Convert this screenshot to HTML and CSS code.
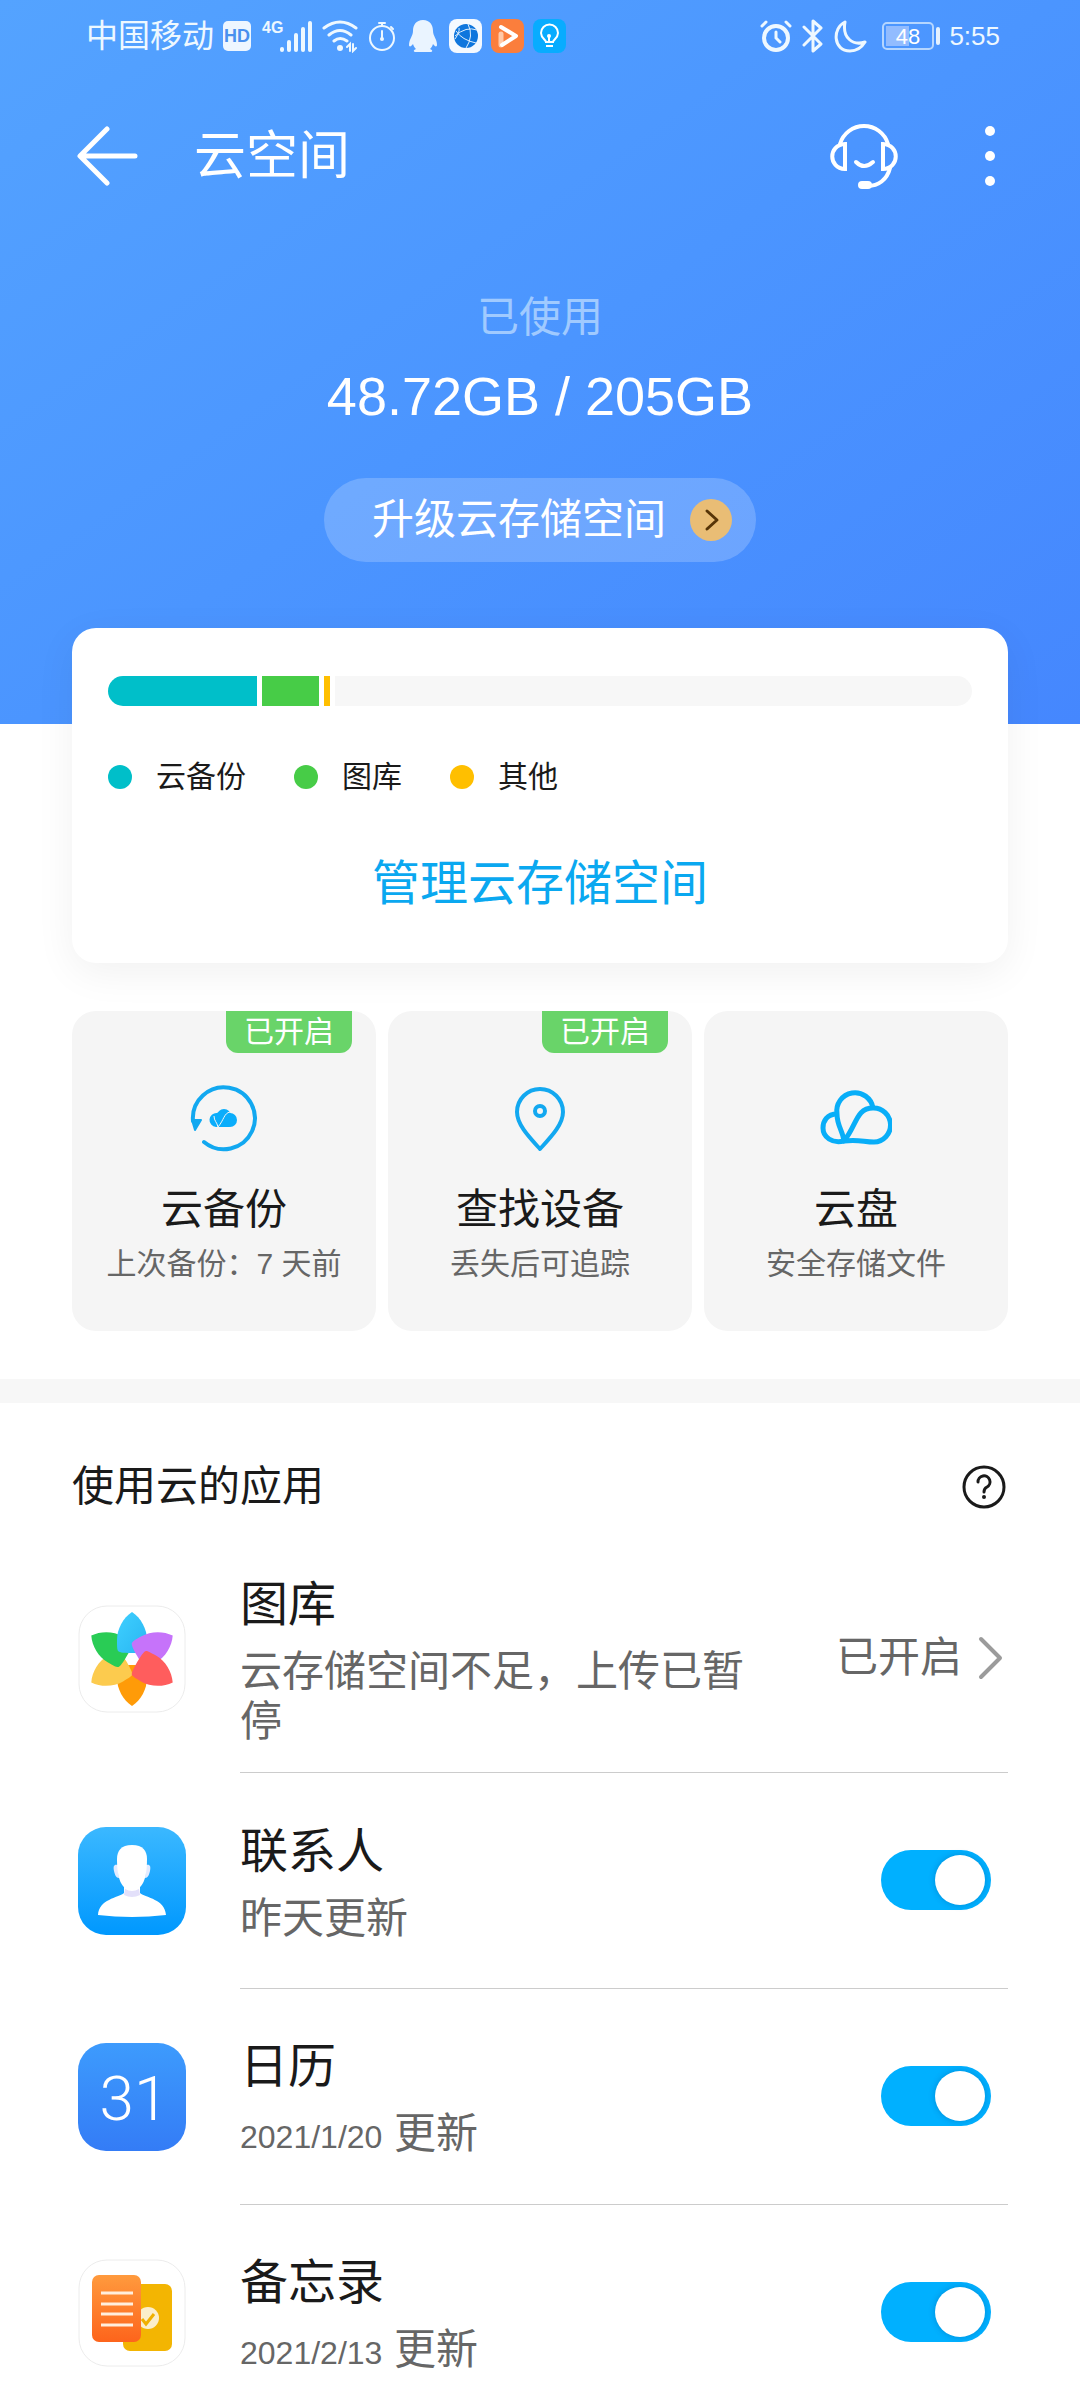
FILE: index.html
```html
<!DOCTYPE html>
<html lang="zh-CN">
<head>
<meta charset="utf-8">
<meta name="viewport" content="width=device-width, initial-scale=1">
<title>云空间</title>
<link rel="stylesheet" href="styles.css">
</head>
<body>
<header class="hero">
  <div class="status">
    <div class="status-group">
      <span class="carrier">中国移动<svg width="30" height="32" viewBox="0 0 30 32"><rect x="1" y="1" width="28" height="30" rx="5" fill="#eef6ff"/><text x="15" y="22" text-anchor="middle" class="hd">HD</text></svg></span>
      <svg width="52" height="34" viewBox="0 0 52 34" fill="#eef8ff"><text x="1" y="14" class="net">4G</text><rect x="19" y="28" width="4" height="5" rx="2"/><rect x="26" y="21" width="4" height="12" rx="2"/><rect x="33" y="14" width="4" height="19" rx="2"/><rect x="40" y="8" width="4" height="25" rx="2"/><rect x="47" y="2" width="4" height="31" rx="2"/></svg>
      <svg width="36" height="34" viewBox="0 0 36 34" fill="none" stroke="#eef8ff" stroke-width="3" stroke-linecap="round"><path d="M2 9Q18-3 34 9M7 16Q18 7 29 16M12 22Q18 17 25 22"/><circle cx="18" cy="29" r="3" fill="#eef8ff" stroke="none"/><path d="M25 28l3-3v7M31 25v7l3-3" stroke-width="2"/></svg>
      <svg width="30" height="34" viewBox="0 0 30 34" fill="none" stroke="#eef8ff" stroke-width="2"><circle cx="15" cy="19" r="12"/><path d="M12 4h6M15 4v3M24 8l2 2M15 12v7" stroke-linecap="round"/><circle cx="15" cy="20" r="2" fill="#eef8ff" stroke="none"/></svg>
      <svg width="34" height="34" viewBox="0 0 34 34" fill="#eaf4ff"><path d="M17 1c-7 0-10 5-10 11 0 5-4 8-4 14 0 2 2 2 4-1 1 3 2 4 3 5-3 1-3 3 0 3h14c3 0 3-2 0-3 1-1 2-2 3-5 2 3 4 3 4 1 0-6-4-9-4-14 0-6-3-11-10-11z"/></svg>
      <svg width="33" height="34" viewBox="0 0 33 34"><rect width="33" height="34" rx="8" fill="#f4f9ff"/><circle cx="17" cy="17" r="12" fill="#0f76dd"/><path d="M6 17Q17 7 28 11M19 5q6 12-2 24M7 12q6 9 20 12M6 20q5-7 4-11" fill="none" stroke="#dff0ff" stroke-width="1"/></svg>
      <svg width="33" height="34" viewBox="0 0 33 34"><rect width="33" height="34" rx="8" fill="#fb7e3c"/><path d="M10 15v11" fill="none" stroke="#ffc9a8" stroke-width="5" stroke-linecap="round"/><path d="M10 8l15 9-14 9" fill="none" stroke="#fff" stroke-width="4" stroke-linecap="round" stroke-linejoin="round"/></svg>
      <svg width="33" height="34" viewBox="0 0 33 34"><rect width="33" height="34" rx="8" fill="#08acff"/><path d="M13 23c0-2-5-4-5-9a8 8 0 0 1 17 0c0 5-5 7-5 9zM13 27h7M16 23v-6" fill="none" stroke="#fff" stroke-width="2"/><circle cx="16" cy="17" r="2" fill="#fff"/></svg>
    </div>
    <div class="status-group">
      <svg width="34" height="34" viewBox="0 0 34 34" fill="none" stroke="#eef8ff" stroke-width="4" stroke-linecap="round"><circle cx="17" cy="19" r="12"/><path d="M17 13v6l4 4M3 7l4-4M31 7l-4-4" stroke-width="3"/></svg>
      <svg width="24" height="34" viewBox="0 0 24 34" fill="none" stroke="#eef8ff" stroke-width="3" stroke-linejoin="round" stroke-linecap="round"><path d="M3 8l17 17-8 7V2l8 7L3 26"/></svg>
      <svg width="34" height="34" viewBox="0 0 34 34" fill="none" stroke="#eef8ff" stroke-width="3" stroke-linejoin="round"><path d="M12 3C-1 9 0 32 17 32c8 0 12-4 15-9-12 4-23-4-20-20z"/></svg>
      <svg width="66" height="34" viewBox="0 0 66 34"><rect x="8" y="4" width="50" height="26" rx="4" fill="none" stroke="#b5d6ff" stroke-width="2"/><rect x="11" y="7" width="23" height="20" fill="#92bcff"/><rect x="61" y="8" width="4" height="18" rx="2" fill="#e4f1ff"/><text x="33" y="25" text-anchor="middle" class="level">48</text></svg>
      <time class="clock">5:55</time>
    </div>
  </div>

  <nav class="appbar">
    <button class="icon-btn" aria-label="返回"><svg width="62" height="60" viewBox="0 0 62 60" fill="none" stroke="#fff" stroke-width="5" stroke-linecap="round" stroke-linejoin="round"><path d="M31 3L4 30l27 27M5 30h54"/></svg></button>
    <h1 class="appbar-title">云空间</h1>
    <button class="icon-btn" aria-label="客服"><svg width="68" height="68" viewBox="0 0 68 68" fill="none" stroke="#fff" stroke-width="4" stroke-linecap="round"><path d="M10 22a25 25 0 0 1 48 0M60 46c-3 12-12 18-22 18"/><path d="M15 22v25C-2 46-2 23 15 22zM53 22v25c17-1 17-24 0-25z"/><path d="M26 40q8 8 17 0"/><path d="M32 63h6" stroke-width="8"/></svg></button>
    <button class="icon-btn" aria-label="更多"><svg width="12" height="60" viewBox="0 0 12 60" fill="#fff"><circle cx="6" cy="5" r="5"/><circle cx="6" cy="30" r="5"/><circle cx="6" cy="55" r="5"/></svg></button>
  </nav>

  <section class="usage">
    <p class="usage-label">已使用</p>
    <p class="usage-value">48.72GB / 205GB</p>
    <button class="upgrade">升级云存储空间<svg width="42" height="42" viewBox="0 0 42 42"><circle cx="21" cy="21" r="21" fill="#e9bd75"/><path d="M17 12l10 9-10 9" fill="none" stroke="#573508" stroke-width="3" stroke-linecap="round" stroke-linejoin="round"/></svg></button>
  </section>
</header>

<main>
  <section class="storage">
    <div class="meter">
      <span class="backup" style="flex-grow:149"></span>
      <span class="gallery" style="flex-grow:57"></span>
      <span class="other" style="flex-grow:6"></span>
      <span class="free" style="flex-grow:637"></span>
    </div>
    <ul class="legend">
      <li><i class="dot backup"></i>云备份</li>
      <li><i class="dot gallery"></i>图库</li>
      <li><i class="dot other"></i>其他</li>
    </ul>
    <a class="manage" href="#manage">管理云存储空间</a>
  </section>

  <section class="tiles">
    <a class="tile" href="#backup">
      <span class="badge">已开启</span>
      <svg width="72" height="72" viewBox="0 0 72 72"><path d="M5 38a31 31 0 1 1 11 21" fill="none" stroke="#12a8f0" stroke-width="4" stroke-linecap="round"/><path d="M4 37h9l-6 10z" fill="#12a8f0" stroke="#12a8f0" stroke-width="2" stroke-linejoin="round"/><path d="M28 44h13a8 8 0 0 0 0-14 9 9 0 0 0-12 0 7 7 0 0 0-1 14z" fill="#0aadfb"/><circle cx="42" cy="37" r="7" fill="#0aadfb"/><circle cx="36" cy="33" r="7" fill="#0aadfb"/><path d="M42 29c-6 1-6 8-12 15-1-5-4-6-4-11" fill="none" stroke="#f5f5f5" stroke-width="1"/></svg>
      <b>云备份</b><small>上次备份：7 天前</small>
    </a>
    <a class="tile" href="#find">
      <span class="badge">已开启</span>
      <svg width="72" height="72" viewBox="0 0 72 72" fill="none" stroke="#12a8f0" stroke-width="4" stroke-linejoin="round"><path d="M36 66C26 55 13 42 13 29a23 23 0 0 1 46 0c0 13-13 26-23 37z"/><circle cx="36" cy="28" r="5"/></svg>
      <b>查找设备</b><small>丢失后可追踪</small>
    </a>
    <a class="tile" href="#drive">
      <svg width="72" height="72" viewBox="0 0 72 72" fill="none" stroke="#08aef8" stroke-width="5" stroke-linejoin="round"><path d="M24 58c14-2 20 1 30 1a17 17 0 1 0-1-34c-17 0-16 17-29 33z"/><path d="M53 25A18 18 0 0 0 17 31c0 12 6 17 7 27"/><path d="M17 31C7 31 3 38 3 45c0 9 9 16 21 13"/></svg>
      <b>云盘</b><small>安全存储文件</small>
    </a>
  </section>

  <section class="apps">
    <div class="apps-head">
      <h2>使用云的应用</h2>
      <button class="icon-btn" aria-label="帮助"><svg width="44" height="44" viewBox="0 0 44 44" fill="none" stroke="#1a1a1a" stroke-width="3" stroke-linecap="round"><circle cx="22" cy="22" r="20"/><path d="M16 17a6 6 0 1 1 9 5c-2 1-3 2-3 5"/><circle cx="22" cy="32" r="2" fill="#1a1a1a" stroke="none"/></svg></button>
    </div>
    <ul class="app-list">
      <li class="app">
        <svg class="app-icon" viewBox="0 0 108 108"><defs>
          <linearGradient id="g-blue" x1="0" y1="0" x2="1" y2="1"><stop offset="0" stop-color="#3fd0ff"/><stop offset="1" stop-color="#29b6f2"/></linearGradient>
          <path id="petal" d="M54 7C45 13 39 24 39 35c0 6 0 9 1 11 1 1 3 2 14 2s13-1 14-2c1-2 1-5 1-11 0-11-6-22-15-28z"/></defs>
          <rect x="1" y="1" width="106" height="106" rx="28" fill="#fff" stroke="#ececec"/>
          <use href="#petal" fill="#ff9b08" transform="rotate(180 54 54)"/>
          <use href="#petal" fill="#fccb4e" transform="rotate(240 54 54)"/>
          <use href="#petal" fill="#29cc55" transform="rotate(300 54 54)"/>
          <use href="#petal" fill="url(#g-blue)"/>
          <use href="#petal" fill="#c673fa" transform="rotate(60 54 54)"/>
          <use href="#petal" fill="#ff5d5d" transform="rotate(120 54 54)"/>
          <circle cx="54" cy="54" r="5" fill="#fff"/></svg>
        <a class="app-body app-link" href="#gallery">
          <span class="app-text"><b>图库</b><small>云存储空间不足，上传已暂停</small></span>
          <span class="app-state">已开启<svg width="26" height="44" viewBox="0 0 26 44" fill="none" stroke="#9b9b9b" stroke-width="4" stroke-linecap="round" stroke-linejoin="round"><path d="M3 3l19 19L3 41"/></svg></span>
        </a>
      </li>
      <li class="app">
        <svg class="app-icon" viewBox="0 0 108 108"><defs><linearGradient id="g-contact" x1="0" y1="0" x2="0" y2="1"><stop offset="0" stop-color="#3bb8ff"/><stop offset="1" stop-color="#0098fe"/></linearGradient></defs><rect width="108" height="108" rx="28" fill="url(#g-contact)"/><path d="M46 58v8c-6 5-25 6-26 22q34 4 68 0c-1-16-20-17-26-22v-8z" fill="#fff"/><path d="M47 62q7 4 14 0l1 6q-8 4-16 0z" fill="#e3e0fa"/><path d="M40 38c-4-1-5 1-4 6 1 4 2 7 5 7M68 38c4-1 5 1 4 6-1 4-2 7-5 7" fill="#e4ebff"/><path d="M54 18c-11 0-15 6-15 14 0 19 4 31 15 31s15-12 15-31c0-8-4-14-15-14z" fill="#fff"/></svg>
        <label class="app-body">
          <span class="app-text"><b>联系人</b><small>昨天更新</small></span>
          <input class="switch" type="checkbox" role="switch" checked>
        </label>
      </li>
      <li class="app">
        <svg class="app-icon" viewBox="0 0 108 108"><defs><linearGradient id="g-cal" x1="0" y1="0" x2="0" y2="1"><stop offset="0" stop-color="#3d9bfd"/><stop offset="1" stop-color="#347cf6"/></linearGradient></defs><rect width="108" height="108" rx="28" fill="url(#g-cal)"/><text x="56" y="77" text-anchor="middle" class="day">31</text></svg>
        <label class="app-body">
          <span class="app-text"><b>日历</b><small><time>2021/1/20</time> 更新</small></span>
          <input class="switch" type="checkbox" role="switch" checked>
        </label>
      </li>
      <li class="app">
        <svg class="app-icon" viewBox="0 0 108 108"><defs><linearGradient id="g-note" x1="0" y1="0" x2="0" y2="1"><stop offset="0" stop-color="#ff9a3d"/><stop offset="1" stop-color="#fd641c"/></linearGradient></defs><rect x="1" y="1" width="106" height="106" rx="28" fill="#fff" stroke="#ececec"/><rect x="45" y="25" width="49" height="67" rx="7" fill="#f3b502"/><circle cx="70" cy="59" r="11" fill="#fbeecb"/><path d="M64 60l4 5 8-10" fill="none" stroke="#f0b000" stroke-width="3"/><rect x="14" y="16" width="49" height="67" rx="7" fill="url(#g-note)"/><path d="M23 34h32M23 45h32M23 55h32M23 66h32" stroke="#ffeedd" stroke-width="3"/></svg>
        <label class="app-body">
          <span class="app-text"><b>备忘录</b><small><time>2021/2/13</time> 更新</small></span>
          <input class="switch" type="checkbox" role="switch" checked>
        </label>
      </li>
    </ul>
  </section>
</main>
</body>
</html>
```
FILE: styles.css
```css
* { box-sizing: border-box; }
body {
  margin: 0;
  background: #fff;
  color: #1a1a1a;
  font-family: "Liberation Sans Narrow", "Liberation Sans", "Noto Sans CJK SC", sans-serif;
  font-size: 42px;
}
h1, h2, p, ul { margin: 0; padding: 0; font-weight: 400; }
ul { list-style: none; }
b { font-weight: 400; }
a { color: inherit; text-decoration: none; }
svg { display: block; flex: none; }
button { border: 0; padding: 0; background: none; color: inherit; font: inherit; }

.hero {
  padding-bottom: 162px;
  background: linear-gradient(145deg, #54a3ff 0%, #4b95ff 50%, #4587fe 100%);
  color: #fff;
}
.status {
  display: flex;
  justify-content: space-between;
  align-items: center;
  height: 72px;
  padding: 0 80px 0 86px;
  color: #eef8ff;
}
.status-group { display: flex; align-items: center; gap: 8px; }
.status-group:first-child { gap: 9px; }
.carrier { display: flex; align-items: center; gap: 8px; font-size: 32px; line-height: 40px; }
.clock { font-size: 26px; line-height: 40px; }
.hd { font: 700 18px "Liberation Sans", sans-serif; fill: #4a90ee; }
.net { font: 700 16px "Liberation Sans", sans-serif; }
.level { font-size: 22px; fill: #fff; }

.appbar { display: flex; align-items: center; height: 168px; padding: 0 84px 0 76px; }
.appbar-title { flex: 1; margin-left: 56px; font-size: 52px; line-height: 72px; }
.appbar .icon-btn + .icon-btn { margin-left: 86px; }

.usage { display: flex; flex-direction: column; align-items: center; padding-top: 48px; }
.usage-label { line-height: 60px; color: #a0caff; }
.usage-value { font-size: 54px; line-height: 96px; }
.upgrade {
  display: flex;
  align-items: center;
  gap: 24px;
  height: 84px;
  margin-top: 34px;
  padding: 0 24px 0 48px;
  border-radius: 42px;
  background: rgba(255, 255, 255, .2);
  line-height: 60px;
}

.storage {
  display: flex;
  flex-direction: column;
  margin: -96px 72px 48px;
  padding: 48px 36px 43px;
  border-radius: 24px;
  background: #fff;
  box-shadow: 0 10px 40px rgba(0, 0, 0, .06);
}
.meter { display: flex; gap: 5px; height: 30px; border-radius: 15px; overflow: hidden; }
.meter span { flex-basis: 0; }
.backup { background: #00bfc9; }
.gallery { background: #47cc47; }
.other { background: #ffbf00; }
.free { background: #f7f7f7; }
.legend { display: flex; gap: 48px; margin: 50px 0; font-size: 30px; line-height: 42px; }
.legend li { display: flex; align-items: center; gap: 24px; }
.dot { width: 24px; height: 24px; border-radius: 50%; }
.manage { align-self: center; font-size: 48px; line-height: 72px; color: #0aa8f0; }

.tiles { display: grid; grid-template-columns: repeat(3, 1fr); gap: 12px; margin: 0 72px 48px; }
.tile {
  position: relative;
  display: flex;
  flex-direction: column;
  align-items: center;
  padding: 72px 0 46px;
  border-radius: 24px;
  background: #f5f5f5;
}
.tile b { margin: 25px 0 3px; line-height: 60px; }
.tile small { font-size: 30px; line-height: 42px; color: #666; white-space: nowrap; }
.badge {
  position: absolute;
  top: 0;
  right: 24px;
  padding: 0 18px;
  border-radius: 0 0 12px 12px;
  background: #69d469;
  color: #fff;
  font-size: 30px;
  line-height: 42px;
}

.apps { padding: 0 72px; border-top: 24px solid #f7f7f7; }
.apps-head { display: flex; justify-content: space-between; align-items: center; height: 142px; padding: 26px 2px 0 0; }
h2 { font-size: 42px; line-height: 60px; }

.app { display: flex; align-items: center; gap: 54px; padding-left: 6px; }
.app-icon { width: 108px; height: 108px; }
.app-body {
  flex: 1;
  display: flex;
  align-items: center;
  justify-content: space-between;
  gap: 72px;
  min-height: 216px;
  padding: 24px 17px 25px 0;
  border-bottom: 1px solid #ccc;
}
.app-link { padding-right: 4px; }
.app:last-child { margin-bottom: -22px; }
.app:last-child .app-body { border-color: transparent; }
.app-text { display: flex; flex-direction: column; gap: 6px; }
.app-text b { font-size: 48px; line-height: 72px; }
.app-text small { font-size: 42px; line-height: 50px; color: #666; }
.app-text time { font-size: 32px; }
.app-state { display: flex; align-items: center; gap: 16px; color: #666; line-height: 60px; white-space: nowrap; }
.day { font: 300 62px Roboto, "Open Sans", sans-serif; fill: #fff; }

.switch {
  appearance: none;
  flex: none;
  display: flex;
  align-items: center;
  width: 110px;
  height: 60px;
  margin: 0;
  padding: 5px 6px;
  border-radius: 30px;
  background: #ccc;
}
.switch::before {
  content: "";
  width: 50px;
  height: 50px;
  border-radius: 50%;
  background: #fff;
  box-shadow: 0 0 6px rgba(0, 60, 120, .3);
}
.switch:checked { justify-content: flex-end; background: #00b0ff; }
```
